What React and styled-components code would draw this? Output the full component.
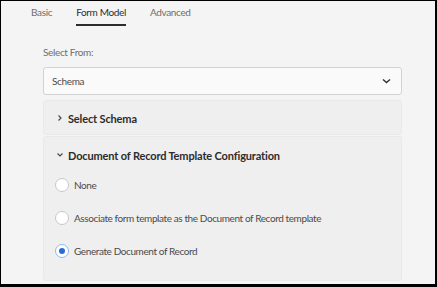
import React from 'react'
import styled, { createGlobalStyle } from 'styled-components'

const GlobalStyle = createGlobalStyle`
  html, body {
    margin: 0;
    padding: 0;
    background: #000;
  }
  body {
    font-family: Lato, "Open Sans", sans-serif;
  }
`

const Frame = styled.div`
  width: 437px;
  height: 287px;
  box-sizing: border-box;
  border-style: solid;
  border-color: #000;
  border-width: 1px 2px 3px 1px;
  background: #f4f4f4;
  overflow: hidden;
`

const Tabs = styled.div`
  display: flex;
  gap: 24px;
  padding-left: 30px;
  height: 25px;
`

const Tab = styled.div`
  font-size: 10px;
  letter-spacing: -0.35px;
  line-height: 23px;
  color: ${p => (p.$active ? '#2c2c2c' : '#6e6e6e')};
  border-bottom: 2px solid ${p => (p.$active ? '#2c2c2c' : 'transparent')};
`

const Body = styled.div`
  padding: 19px 33px 0 42px;
`

const Label = styled.div`
  font-size: 10px;
  letter-spacing: -0.35px;
  color: #6e6e6e;
  line-height: 14px;
  margin-bottom: 8px;
`

const Select = styled.div`
  height: 28px;
  box-sizing: border-box;
  border: 1px solid #d3d3d3;
  border-radius: 3px;
  background: #fafafa;
  display: flex;
  align-items: center;
  justify-content: space-between;
  padding: 0 10px 0 8px;
  font-size: 10px;
  letter-spacing: -0.35px;
  color: #4b4b4b;
`

const Panel = styled.div`
  margin-top: ${p => p.$gap}px;
  background: #efefef;
  border: 1px solid #e9e9e9;
  border-radius: 3px;
  padding: 0 11px;
`

const Header = styled.div`
  display: flex;
  align-items: center;
  gap: 4px;
  height: ${p => p.$h}px;
  padding: 1px 0 0 1px;
  box-sizing: border-box;
  font-size: 11px;
  letter-spacing: -0.15px;
  font-weight: 700;
  color: #2c2c2c;
`

const RadioList = styled.div`
  display: flex;
  flex-direction: column;
  gap: 19px;
  padding: 6px 0 22px;
`

const RadioRow = styled.label`
  display: flex;
  align-items: center;
  gap: 5px;
  font-size: 10px;
  letter-spacing: -0.4px;
  color: #4b4b4b;
  height: 14px;
`

const RadioCircle = styled.span`
  width: 14px;
  height: 14px;
  box-sizing: border-box;
  border-radius: 50%;
  background: #fff;
  border: 1px solid ${p => (p.$checked ? '#8fb8ef' : '#c8c8c8')};
  display: flex;
  align-items: center;
  justify-content: center;
  &::after {
    content: '';
    display: ${p => (p.$checked ? 'block' : 'none')};
    width: 6px;
    height: 6px;
    border-radius: 50%;
    background: #2b6ccf;
  }
`

const Chevron = ({ down }) => (
  <svg width="8" height="8" viewBox="0 0 8 8">
    <path
      d={down ? 'M1.5 2.5 L4 5 L6.5 2.5' : 'M2.5 1.5 L5 4 L2.5 6.5'}
      fill="none"
      stroke="#4b4b4b"
      strokeWidth="1.2"
    />
  </svg>
)

const options = [
  { label: 'None', checked: false },
  { label: 'Associate form template as the Document of Record template', checked: false },
  { label: 'Generate Document of Record', checked: true },
]

export default function App() {
  return (
    <>
      <GlobalStyle />
      <Frame>
        <Tabs>
          <Tab>Basic</Tab>
          <Tab $active>Form Model</Tab>
          <Tab>Advanced</Tab>
        </Tabs>
        <Body>
          <Label>Select From:</Label>
          <Select>
            Schema
            <svg width="9" height="6" viewBox="0 0 9 6">
              <path d="M1 1.5 L4.5 4.5 L8 1.5" fill="none" stroke="#333" strokeWidth="1.5" />
            </svg>
          </Select>
          <Panel $gap={5}>
            <Header $h={33}>
              <Chevron />
              Select Schema
            </Header>
          </Panel>
          <Panel $gap={1}>
            <Header $h={35}>
              <Chevron down />
              Document of Record Template Configuration
            </Header>
            <RadioList>
              {options.map(o => (
                <RadioRow key={o.label}>
                  <RadioCircle $checked={o.checked} />
                  {o.label}
                </RadioRow>
              ))}
            </RadioList>
          </Panel>
        </Body>
      </Frame>
    </>
  )
}
